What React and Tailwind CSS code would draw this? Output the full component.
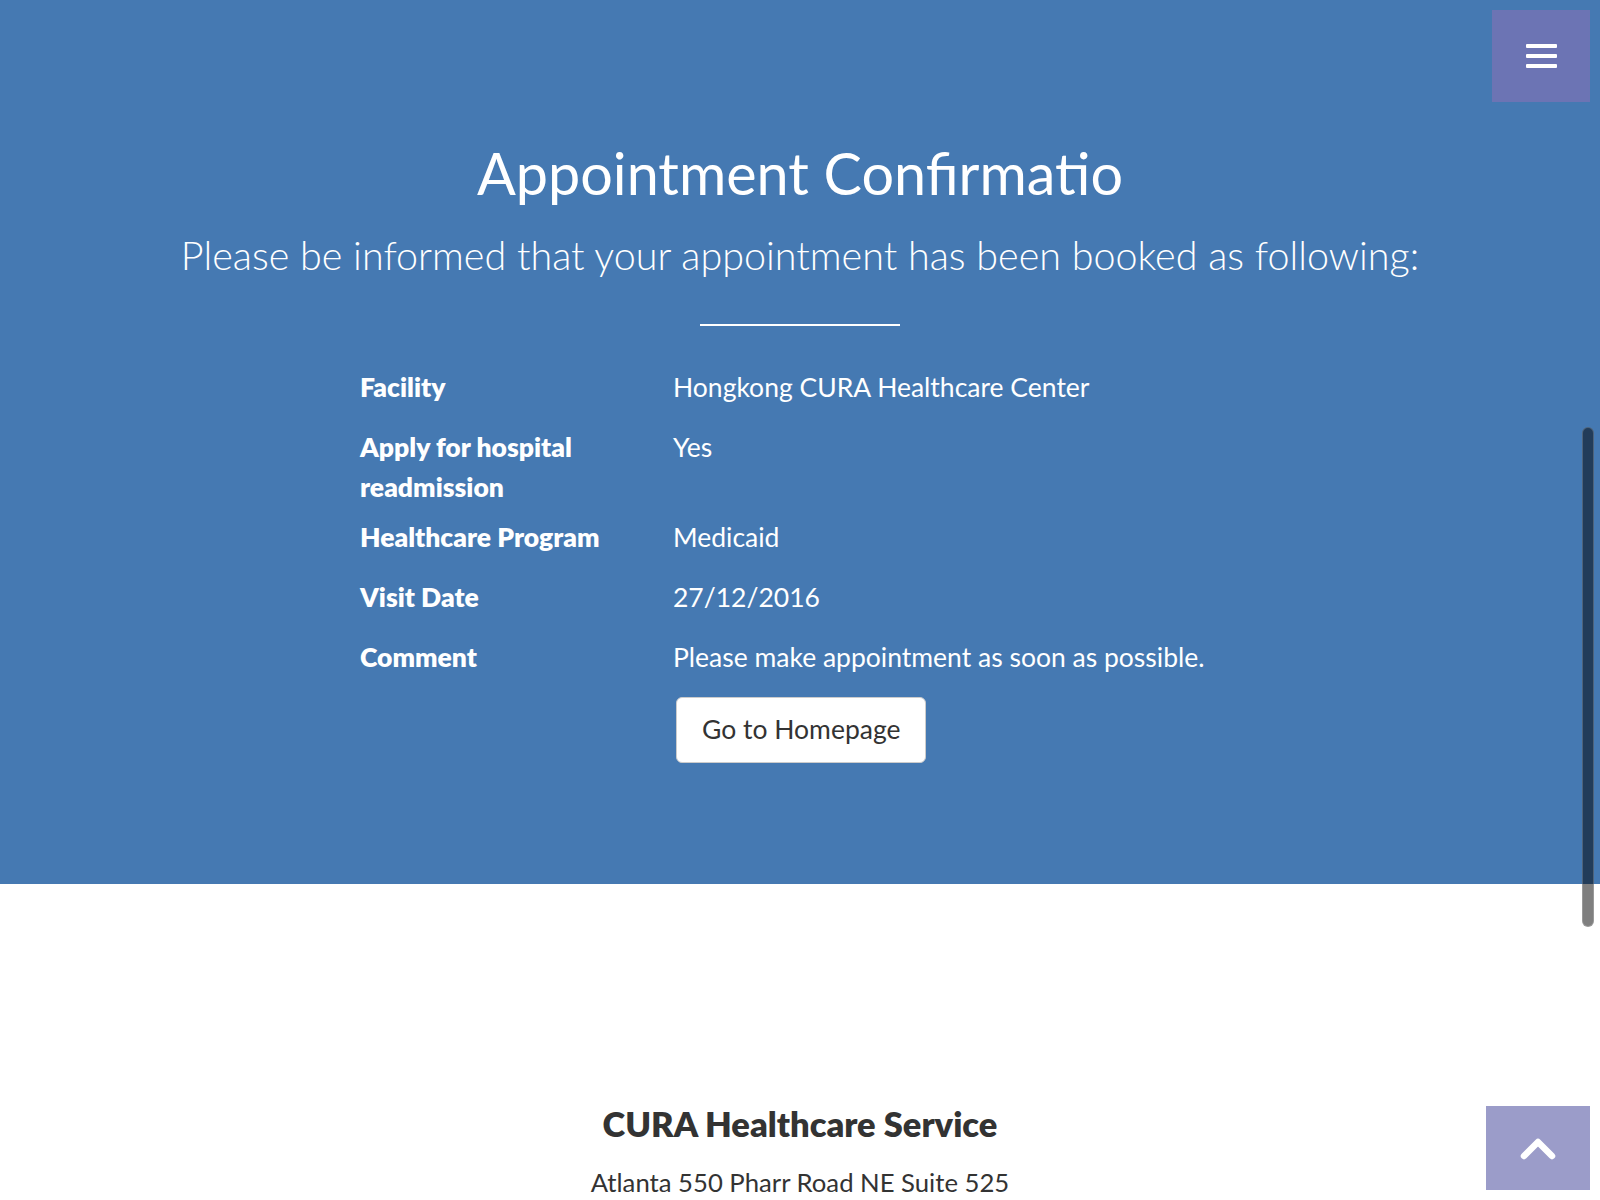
import React from 'react';

const details = [
  { label: 'Facility', value: 'Hongkong CURA Healthcare Center' },
  { label: 'Apply for hospital readmission', value: 'Yes' },
  { label: 'Healthcare Program', value: 'Medicaid' },
  { label: 'Visit Date', value: '27/12/2016' },
  { label: 'Comment', value: 'Please make appointment as soon as possible.' },
];

const DetailRow = ({ label, value }) => (
  <div className="flex items-start">
    <div className="w-[313px] shrink-0 pr-[30px] mb-[10px] font-extrabold leading-[40px]">{label}</div>
    <div className="flex-1 mb-[20px] leading-[40px]">{value}</div>
  </div>
);

const MenuToggle = () => (
  <button className="fixed top-[10px] right-[10px] w-[98px] h-[92px] bg-[#6c74b4] flex flex-col items-center justify-center gap-[6px]">
    <span className="block w-[31px] h-[4px] rounded-[1px] bg-white"></span>
    <span className="block w-[31px] h-[4px] rounded-[1px] bg-white"></span>
    <span className="block w-[31px] h-[4px] rounded-[1px] bg-white"></span>
  </button>
);

const ToTop = () => (
  <button className="fixed bottom-[10px] right-[10px] w-[104px] h-[84px] bg-[#9b9cc9] flex items-center justify-center">
    <svg width="36" height="26" viewBox="0 0 36 26">
      <polyline points="4,21 18,7 32,21" fill="none" stroke="white" strokeWidth="6.5" strokeLinecap="round" strokeLinejoin="round" />
    </svg>
  </button>
);

export default function App() {
  return (
    <div className="relative h-[1200px] overflow-hidden bg-white font-['Lato','Liberation_Sans',sans-serif]">
      {/* confirmation header */}
      <section className="h-[884px] bg-[#4579b2] text-white pt-[142px]">
        <h1 className="text-center text-[57.5px] leading-[62px] font-normal">Appointment Confirmatio</h1>
        <p className="mt-[28px] text-center text-[39.5px] leading-[46px] font-light">
          Please be informed that your appointment has been booked as following:
        </p>
        <hr className="mx-auto mt-[46px] w-[200px] border-0 border-t-2 border-white" />

        <div className="mx-auto mt-[41px] w-[880px] text-[26.5px]">
          {details.map((d) => (
            <DetailRow key={d.label} label={d.label} value={d.value} />
          ))}
          <div className="flex">
            <div className="w-[313px] shrink-0"></div>
            <button className="ml-[3px] h-[66px] px-[25px] bg-white text-[#333] text-[26.5px] border border-[#ccc] rounded-[6px]">
              Go to Homepage
            </button>
          </div>
        </div>
      </section>

      {/* footer */}
      <footer className="text-center text-[#333] pt-[218px]">
        <h4 className="text-[34.5px] leading-[44px] font-extrabold">CURA Healthcare Service</h4>
        <p className="mt-[18px] text-[25.7px] leading-[36px]">Atlanta 550 Pharr Road NE Suite 525</p>
      </footer>

      <MenuToggle />
      <ToTop />
      {/* overlay scrollbar thumb */}
      <div className="absolute top-[427px] right-[6px] w-[12px] h-[500px] rounded-full bg-black/50 border border-white/20"></div>
    </div>
  );
}
